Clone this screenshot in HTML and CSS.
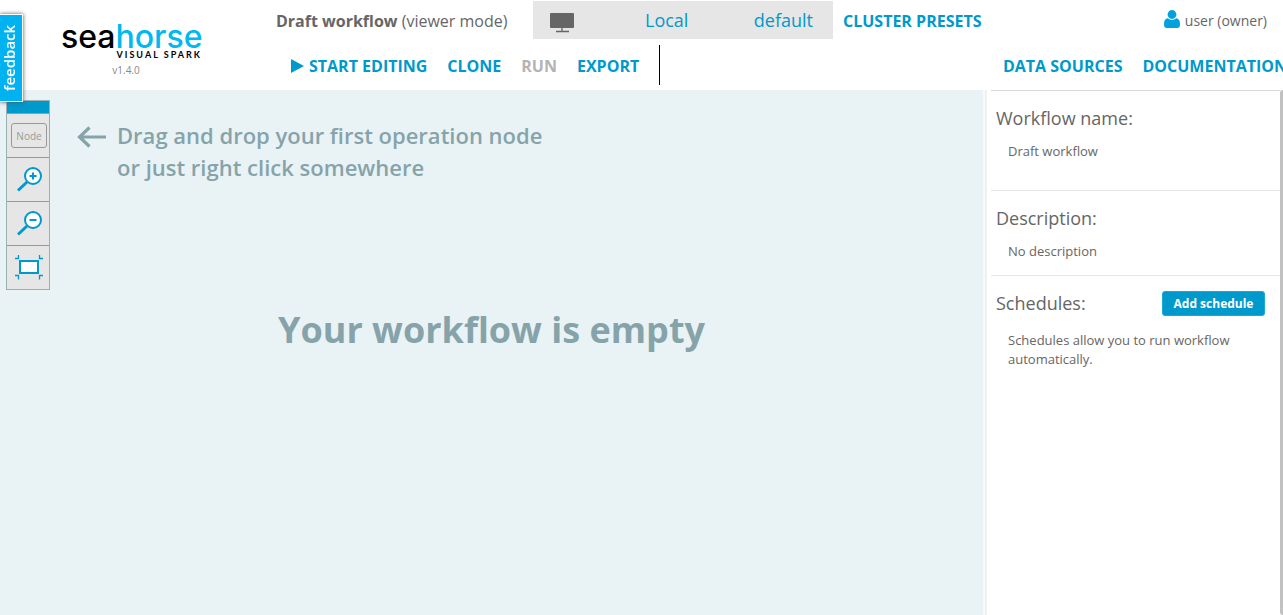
FILE: index.html
```html
<!DOCTYPE html>
<html lang="en">
<head>
<meta charset="utf-8">
<meta name="viewport" content="width=device-width, initial-scale=1">
<title>Seahorse - Draft workflow</title>
<link rel="stylesheet" href="styles.css">
</head>
<body>
<header class="header">
  <div class="brand">
    <a class="logo" href="#"><span class="logo-name">sea<span class="logo-accent">horse</span></span><span class="logo-tag">VISUAL SPARK</span></a>
    <span class="version">v1.4.0</span>
  </div>
  <div class="header-rows">
    <div class="status-row">
      <div class="workflow-title"><strong>Draft workflow</strong> <span class="mode">(viewer mode)</span></div>
      <div class="cluster">
        <svg class="cluster-icon" viewBox="0 0 26 20" width="26" height="20" aria-hidden="true"><rect x="1" y="0" width="24" height="15" rx="1" fill="#666"/><path d="M13 15v3M7 18.500h13" stroke="#666" stroke-width="1.300" fill="none"/></svg>
        <a class="cluster-name" href="#">Local</a>
        <a class="cluster-preset" href="#">default</a>
      </div>
      <a class="menu-link" href="#">CLUSTER PRESETS</a>
      <div class="user">
        <svg class="user-icon" viewBox="0 0 16 18" width="16" height="18" aria-hidden="true"><circle cx="8" cy="4.500" r="4.400" fill="#00a1de"/><path d="M0 14.500Q0 8.500 3.800 8.300Q8 11.500 12.200 8.300Q16 8.500 16 14.500Q16 18 13 18H3Q0 18 0 14.500Z" fill="#00a1de"/></svg>
        <span>user (owner)</span>
      </div>
    </div>
    <nav class="menu-row">
      <a class="menu-link start" href="#"><svg viewBox="0 0 13 14" width="13" height="14" aria-hidden="true"><path d="M0 0l13 7-13 7z" fill="#0099cb"/></svg>START EDITING</a>
      <a class="menu-link" href="#">CLONE</a>
      <button class="menu-link run" type="button" disabled>RUN</button>
      <a class="menu-link" href="#">EXPORT</a>
      <span class="divider"></span>
      <div class="menu-end">
        <a class="menu-link" href="#">DATA SOURCES</a>
        <a class="menu-link" href="#">DOCUMENTATION</a>
      </div>
    </nav>
  </div>
</header>

<main class="workspace">
  <section class="canvas">
    <div class="toolbar">
      <div class="toolbar-handle"></div>
      <button class="tool" type="button"><span class="node-label">Node</span></button>
      <button class="tool" type="button" aria-label="Zoom in"><svg viewBox="0 0 42 43" width="42" height="43"><path d="M20 24L11 32.500" stroke="#0099cb" stroke-width="3"/><circle cx="26" cy="18" r="8" fill="#fff" stroke="#0099cb" stroke-width="2"/><path d="M22.500 18h7M26 14.500v7" stroke="#0099cb" stroke-width="2"/></svg></button>
      <button class="tool" type="button" aria-label="Zoom out"><svg viewBox="0 0 42 43" width="42" height="43"><path d="M20 24L11 32.500" stroke="#0099cb" stroke-width="3"/><circle cx="26" cy="18" r="8" fill="#fff" stroke="#0099cb" stroke-width="2"/><path d="M22.500 18h7" stroke="#0099cb" stroke-width="2"/></svg></button>
      <button class="tool" type="button" aria-label="Fit to view"><svg viewBox="0 0 42 43" width="42" height="43"><rect x="13" y="15" width="18" height="12" fill="#fff" stroke="#0099cb" stroke-width="2"/><path d="M8 12.500h3.500v-3.500M36 12.500h-3.500v-3.500M8 29.500h3.500v4M36 29.500h-3.500v4" stroke="#0099cb" stroke-width="1.300" fill="none"/></svg></button>
    </div>
    <div class="hint">
      <svg viewBox="0 0 29 22" width="29" height="22" aria-hidden="true"><path d="M2.500 11H29M12.500 1.500L2.500 11l10 9.500" fill="none" stroke="#87a3aa" stroke-width="3.200"/></svg>
      <p class="hint-text">Drag and drop your first operation node<br>or just right click somewhere</p>
    </div>
    <h1 class="empty">Your workflow is empty</h1>
  </section>
  <aside class="side">
    <div class="panel">
      <section class="block block-name">
        <h2 class="block-title">Workflow name:</h2>
        <p class="block-text">Draft workflow</p>
      </section>
      <section class="block">
        <h2 class="block-title">Description:</h2>
        <p class="block-text">No description</p>
      </section>
      <section class="block">
        <div class="block-head">
          <h2 class="block-title">Schedules:</h2>
          <button class="add" type="button">Add schedule</button>
        </div>
        <p class="block-text">Schedules allow you to run workflow automatically.</p>
      </section>
    </div>
    <div class="scroll-thumb"></div>
  </aside>
</main>
<button class="feedback" type="button">feedback</button>
</body>
</html>
```

FILE: styles.css
```css
* { box-sizing: border-box; }
body {
  margin: 0;
  min-height: 100vh;
  display: flex;
  flex-direction: column;
  overflow: hidden;
  background: #fff;
  color: #666;
  font-family: "Open Sans", sans-serif;
  font-size: 14px;
}
h1, h2, p { margin: 0; }
a { color: #0099cb; text-decoration: none; }
button { font-family: inherit; border: 0; padding: 0; background: none; }
svg { display: block; flex: none; }

.header { display: flex; height: 90px; }
.brand {
  flex: none;
  width: 276px;
  padding: 23px 0 0 61px;
}
.logo { display: block; width: 141px; color: #000; }
.logo-name {
  display: block;
  font: 500 32px/28px Inter, sans-serif;
}
.logo-accent { color: #00b9f2; }
.logo-tag {
  display: block;
  text-align: right;
  font: 700 9px/8px Lato, sans-serif;
  letter-spacing: 2px;
}
.version {
  display: block;
  width: 130px;
  margin-top: 5px;
  text-align: center;
  font-size: 10px;
  line-height: 12px;
  color: #888;
}
.header-rows { flex: 1; min-width: 0; }
.status-row {
  display: flex;
  align-items: center;
  height: 40px;
  white-space: nowrap;
}
.workflow-title { width: 257px; font-size: 16px; }
.cluster {
  display: flex;
  align-items: center;
  width: 300px;
  height: 38px;
  margin-right: 10px;
  padding: 0 20px 0 16px;
  background: #e6e6e6;
  font-size: 18px;
}
.cluster-icon { margin-top: 6px; }
.cluster-name { margin-left: 70px; }
.cluster-preset { margin-left: auto; }
.menu-link { font-size: 16px; font-weight: 700; white-space: nowrap; }
.workflow-title, .status-row .menu-link { padding-top: 1px; }
.user {
  display: flex;
  align-items: center;
  gap: 5px;
  margin-left: auto;
  padding-right: 16px;
}
.user-icon { margin-bottom: 2px; }
.menu-row {
  display: flex;
  align-items: center;
  gap: 20px;
  height: 40px;
  margin-top: 5px;
  padding-left: 15px;
}
.menu-row .menu-link { padding-top: 2px; }
.start { display: flex; align-items: center; gap: 5px; }
.run { color: #b3b3b3; }
.divider { width: 1px; height: 40px; background: #000; }
.menu-end { display: flex; gap: 20px; margin-left: auto; margin-right: -4px; }

.workspace { flex: 1; display: flex; }
.canvas {
  position: relative;
  flex: 1;
  padding-top: 29px;
  background: #e9f3f6;
}
.toolbar {
  position: absolute;
  left: 6px;
  top: 10px;
  width: 44px;
  border: 1px solid #9ab0b2;
  background: #e6e6e6;
}
.toolbar-handle { height: 12px; background: #0099cb; }
.tool {
  display: flex;
  align-items: center;
  justify-content: center;
  width: 100%;
  height: 44px;
  border-top: 1px solid #999;
}
.node-label {
  width: 36px;
  height: 25px;
  border: 1px solid #999;
  border-radius: 3px;
  font-size: 10px;
  line-height: 24px;
  color: #999;
  margin-left: 2px;
}
.hint {
  display: flex;
  gap: 11px;
  padding-left: 77px;
  color: #87a3aa;
}
.hint svg { margin-top: 7px; }
.hint-text { font-size: 22px; font-weight: 600; line-height: 32px; }
.empty {
  margin-top: 121px;
  text-align: center;
  font-size: 36px;
  line-height: 52px;
  color: #87a3aa;
}
.side {
  display: flex;
  flex: none;
  width: 300px;
  border-left: 2px solid #fafafa;
}
.panel {
  flex: 1;
  border-left: 2px solid #f0f0f0;
  padding-left: 4px;
}
.block {
  padding: 14px 15px 14px 5px;
  border-top: 1px solid #e3e7ea;
}
.block-name { padding-bottom: 29px; border-top-color: #d9d9d9; }
.block-title { font-size: 18px; font-weight: 400; line-height: 26px; }
.block-head {
  display: flex;
  align-items: center;
  justify-content: space-between;
  margin-bottom: 4px;
}
.block-text {
  padding: 11px 20px 0 12px;
  font-size: 13px;
  line-height: 19px;
}
.add {
  width: 103px;
  height: 25px;
  border: 1px solid #1ba8d6;
  border-radius: 3px;
  background: #0099cb;
  color: #fff;
  font-size: 12px;
  font-weight: 700;
}
.scroll-thumb {
  width: 3px;
  border-radius: 6px 0 0 6px;
  background: #c1c1c1;
}
.feedback {
  position: fixed;
  left: 0;
  top: 14px;
  width: 23px;
  height: 88px;
  padding-left: 3px;
  border: 1px solid #fff;
  border-right: 0;
  background: #00b3f0;
  box-shadow: 0 0 4px #555;
  color: #fff;
  font-size: 15px;
  font-weight: 600;
  line-height: 18px;
  writing-mode: vertical-rl;
  transform: rotate(180deg);
}
```
